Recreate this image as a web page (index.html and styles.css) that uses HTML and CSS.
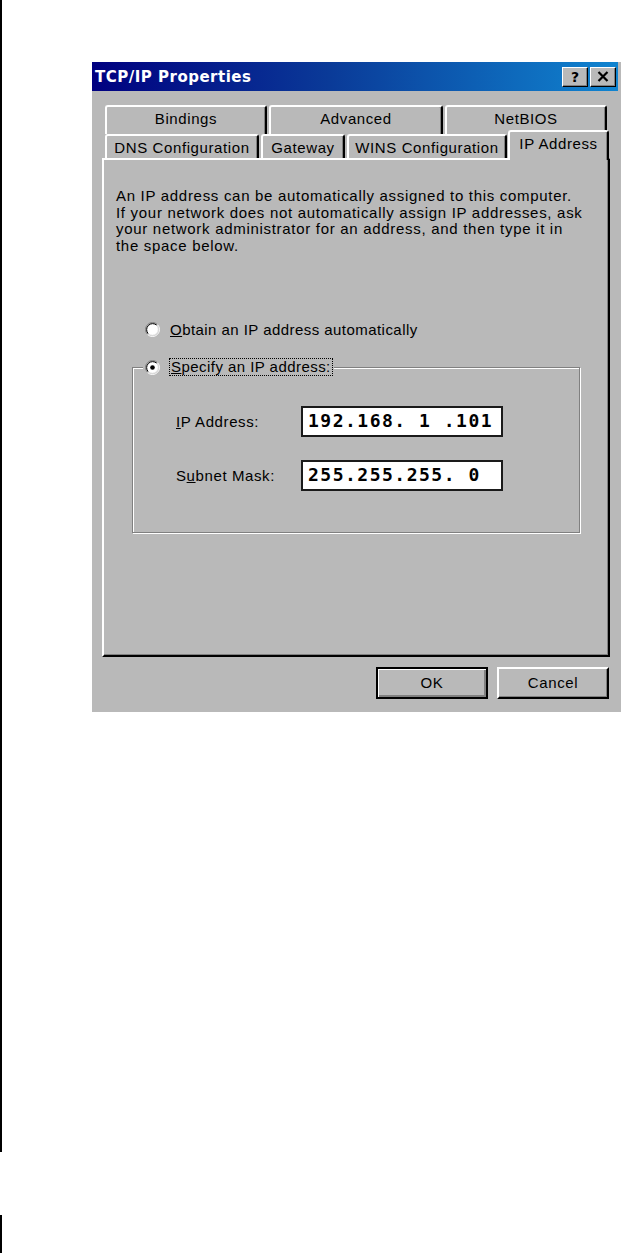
FILE: index.html
```html
<!DOCTYPE html>
<html>
<head>
<meta charset="utf-8">
<title>TCP/IP Properties</title>
<link rel="stylesheet" href="styles.css">
</head>
<body>
<div class="page">
  <div class="gutter">
    <div class="seg seg-top"></div>
    <div class="seg seg-bottom"></div>
  </div>
  <div class="content">
    <div class="dialog">
      <div class="titlebar">
        <span class="title">TCP/IP Properties</span>
        <div class="title-buttons">
          <div class="tbtn"><span class="q">?</span></div>
          <div class="tbtn">
            <svg width="12" height="11" viewBox="0 0 12 11"><path d="M1.5 1 L10.5 10 M10.5 1 L1.5 10" stroke="#000" stroke-width="2.2" fill="none"/></svg>
          </div>
        </div>
      </div>
      <div class="dialog-body">
        <div class="tabs">
          <div class="tab-row back">
            <div class="tab w-bind">Bindings</div>
            <div class="tab w-adv">Advanced</div>
            <div class="tab w-net">NetBIOS</div>
          </div>
          <div class="tab-row front">
            <div class="tab w-dns">DNS Configuration</div>
            <div class="tab w-gw">Gateway</div>
            <div class="tab w-wins">WINS Configuration</div>
            <div class="tab tab-active w-ip">IP Address</div>
          </div>
        </div>
        <div class="panel">
          <p class="intro">An IP address can be automatically assigned to this computer.<br>If your network does not automatically assign IP addresses, ask<br>your network administrator for an address, and then type it in<br>the space below.</p>
          <div class="radio-row">
            <svg class="radio" width="15" height="15" viewBox="0 0 15 15">
              <circle cx="7.5" cy="7.5" r="6" fill="#fff"/>
              <path d="M2.55 12.45 A7 7 0 0 1 12.45 2.55" stroke="#808080" stroke-width="1" fill="none"/>
              <path d="M12.45 2.55 A7 7 0 0 1 2.55 12.45" stroke="#fff" stroke-width="1" fill="none"/>
              <path d="M3.26 11.74 A6 6 0 0 1 11.74 3.26" stroke="#000" stroke-width="1" fill="none"/>
              <path d="M11.74 3.26 A6 6 0 0 1 3.26 11.74" stroke="#dcdcdc" stroke-width="1" fill="none"/>
            </svg>
            <span class="radio-label"><u>O</u>btain an IP address automatically</span>
          </div>
          <fieldset class="group">
            <legend class="group-legend">
              <svg class="radio" width="15" height="15" viewBox="0 0 15 15">
                <circle cx="7.5" cy="7.5" r="6" fill="#fff"/>
                <path d="M2.55 12.45 A7 7 0 0 1 12.45 2.55" stroke="#808080" stroke-width="1" fill="none"/>
                <path d="M12.45 2.55 A7 7 0 0 1 2.55 12.45" stroke="#fff" stroke-width="1" fill="none"/>
                <path d="M3.26 11.74 A6 6 0 0 1 11.74 3.26" stroke="#000" stroke-width="1" fill="none"/>
                <path d="M11.74 3.26 A6 6 0 0 1 3.26 11.74" stroke="#dcdcdc" stroke-width="1" fill="none"/>
                <circle cx="7.5" cy="7.5" r="2.3" fill="#000"/>
              </svg>
              <span class="radio-label focus"><u>S</u>pecify an IP address:</span>
            </legend>
            <div class="field-row">
              <span class="field-label"><u>I</u>P Address:</span>
              <div class="ipbox">192.168. 1 .101</div>
            </div>
            <div class="field-row">
              <span class="field-label">S<u>u</u>bnet Mask:</span>
              <div class="ipbox">255.255.255. 0</div>
            </div>
          </fieldset>
        </div>
        <div class="buttons">
          <div class="btn btn-default"><span class="btn-inner">OK</span></div>
          <div class="btn"><span class="btn-inner">Cancel</span></div>
        </div>
      </div>
    </div>
  </div>
</div>
</body>
</html>
```

FILE: styles.css
```css
* { box-sizing: border-box; }

html, body {
  margin: 0;
  padding: 0;
  background: #fff;
}

body {
  font-family: "Liberation Sans", Arial, sans-serif;
  font-size: 15px;
  letter-spacing: 0.6px;
  color: #000;
}

.page {
  display: flex;
  width: 621px;
  height: 1253px;
  overflow: hidden;
}

.gutter {
  width: 2px;
  display: flex;
  flex-direction: column;
  flex: 0 0 2px;
}

.seg { background: #000; width: 2px; }
.seg-top { height: 1152px; }
.seg-bottom { height: 38px; margin-top: 63px; }

.content {
  padding-top: 62px;
  margin-left: 90px;
}

.dialog {
  width: 529px;
  height: 650px;
  background: #b9b9b9;
  padding-right: 3px;
}

.titlebar {
  height: 29px;
  background: linear-gradient(to right, #000080 0%, #0a3a98 45%, #1084d0 100%);
  display: flex;
  align-items: center;
  justify-content: space-between;
  padding: 0 2px 0 3px;
}

.title {
  color: #fff;
  font-family: "DejaVu Sans", sans-serif;
  font-weight: bold;
  font-size: 15px;
  letter-spacing: 0.5px;
}

.title-buttons {
  display: flex;
  gap: 2px;
}

.tbtn {
  width: 26px;
  height: 20px;
  background: #b9b9b9;
  border-top: 1px solid #fff;
  border-left: 1px solid #fff;
  border-right: 1px solid #000;
  border-bottom: 1px solid #000;
  box-shadow: inset -1px -1px 0 #808080;
  display: flex;
  align-items: center;
  justify-content: center;
}

.q {
  font-family: "DejaVu Sans", sans-serif;
  font-weight: bold;
  font-size: 14px;
  letter-spacing: 0;
  line-height: 1;
  margin-top: 1px;
}

.dialog-body {
  padding: 14px 0 0 10px;
}

.tabs {
  display: flex;
  flex-direction: column;
  width: 508px;
}

.tab-row {
  display: flex;
  padding-left: 3px;
}

.tab-row.back { height: 29px; }
.tab-row.front { height: 24px; }

.tab {
  background: #b9b9b9;
  border-top: 2px solid #fff;
  border-left: 2px solid #fff;
  border-right: 2px solid #000;
  border-radius: 3px 3px 0 0;
  box-shadow: inset -1px 0 0 #808080;
  display: flex;
  justify-content: center;
  padding-top: 4px;
  line-height: 16px;
  white-space: nowrap;
}

.w-bind { width: 162px; margin-right: 2px; }
.w-adv { width: 174px; margin-right: 2px; }
.w-net { width: 162px; }

.w-dns { width: 154px; margin-right: 2px; }
.w-gw { width: 84px; margin-right: 2px; }
.w-wins { width: 160px; }
.w-ip { width: 101px; margin-left: 1px; }

.tab-active {
  position: relative;
  z-index: 2;
  margin-top: -4px;
  margin-bottom: -2px;
  padding-top: 4px;
}

.panel {
  width: 508px;
  height: 499px;
  border-top: 2px solid #fff;
  border-left: 2px solid #fff;
  border-right: 2px solid #000;
  border-bottom: 2px solid #000;
  box-shadow: inset -1px -1px 0 #808080;
  padding: 0;
  display: flex;
  flex-direction: column;
}

.intro {
  margin: 28px 0 0 12px;
  line-height: 16.6px;
  letter-spacing: 0.7px;
  white-space: nowrap;
}

.radio-row {
  display: flex;
  align-items: center;
  height: 17px;
  margin: 67px 0 0 41px;
}

.radio {
  flex: 0 0 15px;
  display: block;
}

.radio-label {
  margin-left: 10px;
  line-height: 16px;
  letter-spacing: 0.45px;
  white-space: nowrap;
}

.group {
  margin: 20px 0 0 28px;
  padding: 0;
  width: 448px;
  min-width: 0;
  border: 1px solid #808080;
  box-shadow: inset 1px 1px 0 #fff, 1px 1px 0 #fff;
  height: 175px;
}

.group-legend {
  margin-left: 10px;
  padding: 0 2px;
  display: flex;
  align-items: center;
  background: #b9b9b9;
  height: 18px;
}

.focus {
  outline: 1px dotted #000;
  outline-offset: 0;
  padding: 0 1px;
}

.field-row {
  display: flex;
  align-items: center;
  height: 31px;
  padding-left: 43px;
  margin-top: 23px;
}

.field-row:first-of-type { margin-top: 30px; }

.field-label {
  width: 125px;
  white-space: nowrap;
}

.ipbox {
  width: 202px;
  height: 31px;
  background: #fff;
  border: 2px solid #1a1a1a;
  font-family: "DejaVu Sans Mono", monospace;
  font-weight: bold;
  font-size: 18px;
  letter-spacing: 1.5px;
  padding-left: 5px;
  line-height: 26px;
  white-space: pre;
}

.buttons {
  width: 508px;
  display: flex;
  justify-content: flex-end;
  gap: 9px;
  margin-top: 10px;
  padding-right: 1px;
}

.btn {
  width: 112px;
  height: 32px;
  background: #b9b9b9;
  border-top: 2px solid #fff;
  border-left: 2px solid #fff;
  border-right: 2px solid #000;
  border-bottom: 2px solid #000;
  box-shadow: inset -1px -1px 0 #808080;
  display: flex;
  align-items: center;
  justify-content: center;
}

.btn-default {
  border: 2px solid #000;
  box-shadow: inset 1px 1px 0 #fff, inset -2px -2px 0 #808080;
}

.btn-inner {
  line-height: 16px;
}
```
